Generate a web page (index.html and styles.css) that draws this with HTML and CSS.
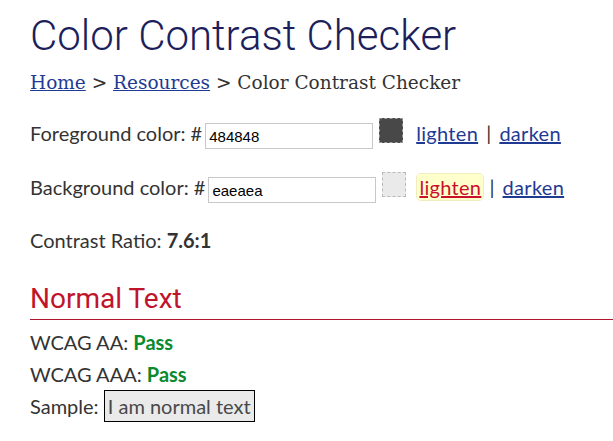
FILE: index.html
```html
<!DOCTYPE html>
<html>
<head>
<meta charset="utf-8">
<link rel="stylesheet" href="styles.css">
</head>
<body>
<main class="page">
  <h1 class="title">Color Contrast Checker</h1>
  <nav class="crumbs"><a href="#">Home</a> &gt; <a href="#">Resources</a> &gt; Color Contrast Checker</nav>

  <div class="color-row">
    <label class="label">Foreground color: #</label><input class="hex" type="text" value="484848">
    <span class="swatch swatch-fg"></span>
    <span class="actions"><a href="#" class="act">lighten</a> | <a href="#" class="act">darken</a></span>
  </div>

  <div class="color-row">
    <label class="label">Background color: #</label><input class="hex" type="text" value="eaeaea">
    <span class="swatch swatch-bg"></span>
    <span class="actions"><a href="#" class="act act-hover">lighten</a> | <a href="#" class="act">darken</a></span>
  </div>

  <p class="ratio">Contrast Ratio: <strong>7.6:1</strong></p>

  <h2 class="section">Normal Text</h2>
  <p class="line">WCAG AA: <strong class="pass">Pass</strong></p>
  <p class="line">WCAG AAA: <strong class="pass">Pass</strong></p>
  <p class="line">Sample: <span class="sample">I am normal text</span></p>
</main>
</body>
</html>
```
FILE: styles.css
```css
html, body {
  margin: 0;
  padding: 0;
  background: #ffffff;
}
body {
  font-family: Lato, "Open Sans", sans-serif;
  color: #333333;
  font-size: 20px;
}
.page {
  padding: 10px 0 0 30px;
}
.title {
  font-family: Roboto, sans-serif;
  font-weight: 300;
  font-size: 42px;
  color: #1c1f5c;
  margin: 0;
  line-height: 52px;
}
.crumbs {
  font-family: "DejaVu Serif", serif;
  font-size: 18.5px;
  color: #333;
  margin-top: 10px;
}
.crumbs a {
  color: #1f3a93;
}
.color-row {
  display: flex;
  align-items: center;
  margin-top: 26px;
  height: 28px;
}
.label {
  white-space: pre;
}
.hex {
  font-family: "Liberation Sans", Arial, sans-serif;
  font-size: 15px;
  width: 160px;
  height: 22px;
  padding: 1px 3px;
  border: 1px solid #c8c8c8;
  color: #000;
  margin: 6px 6px 0 3px;
}
.swatch {
  width: 22px;
  height: 23px;
  border: 1px dashed #999;
  align-self: flex-start;
  margin-top: -1px;
}
.swatch-fg { background: #484848; }
.swatch-bg { background: #eaeaea; border-color: #bbb; }
.actions {
  margin-left: 11px;
  color: #333;
  word-spacing: 1px;
}
.act {
  color: #1f3a93;
  padding: 1px 2px;
  border-radius: 4px;
  letter-spacing: 0.3px;
}
.act-hover {
  background: #ffffcc;
  color: #c8102e;
  box-shadow: 0 0 0 1px #f0ecc0;
}
.ratio {
  margin: 27px 0 0;
}
.ratio strong {
  font-weight: 700;
}
.section {
  font-family: Roboto, sans-serif;
  font-weight: 400;
  font-size: 28px;
  color: #c0142b;
  margin: 30px 0 6px;
  padding-bottom: 3px;
  border-bottom: 1px solid #b0162b;
  line-height: 34px;
}
.line {
  margin: 0;
  line-height: 32px;
}
.pass {
  color: #0a8a2e;
}
.sample {
  background: #eaeaea;
  color: #484848;
  border: 1px solid #000;
  padding: 3px 3px;
}
```
